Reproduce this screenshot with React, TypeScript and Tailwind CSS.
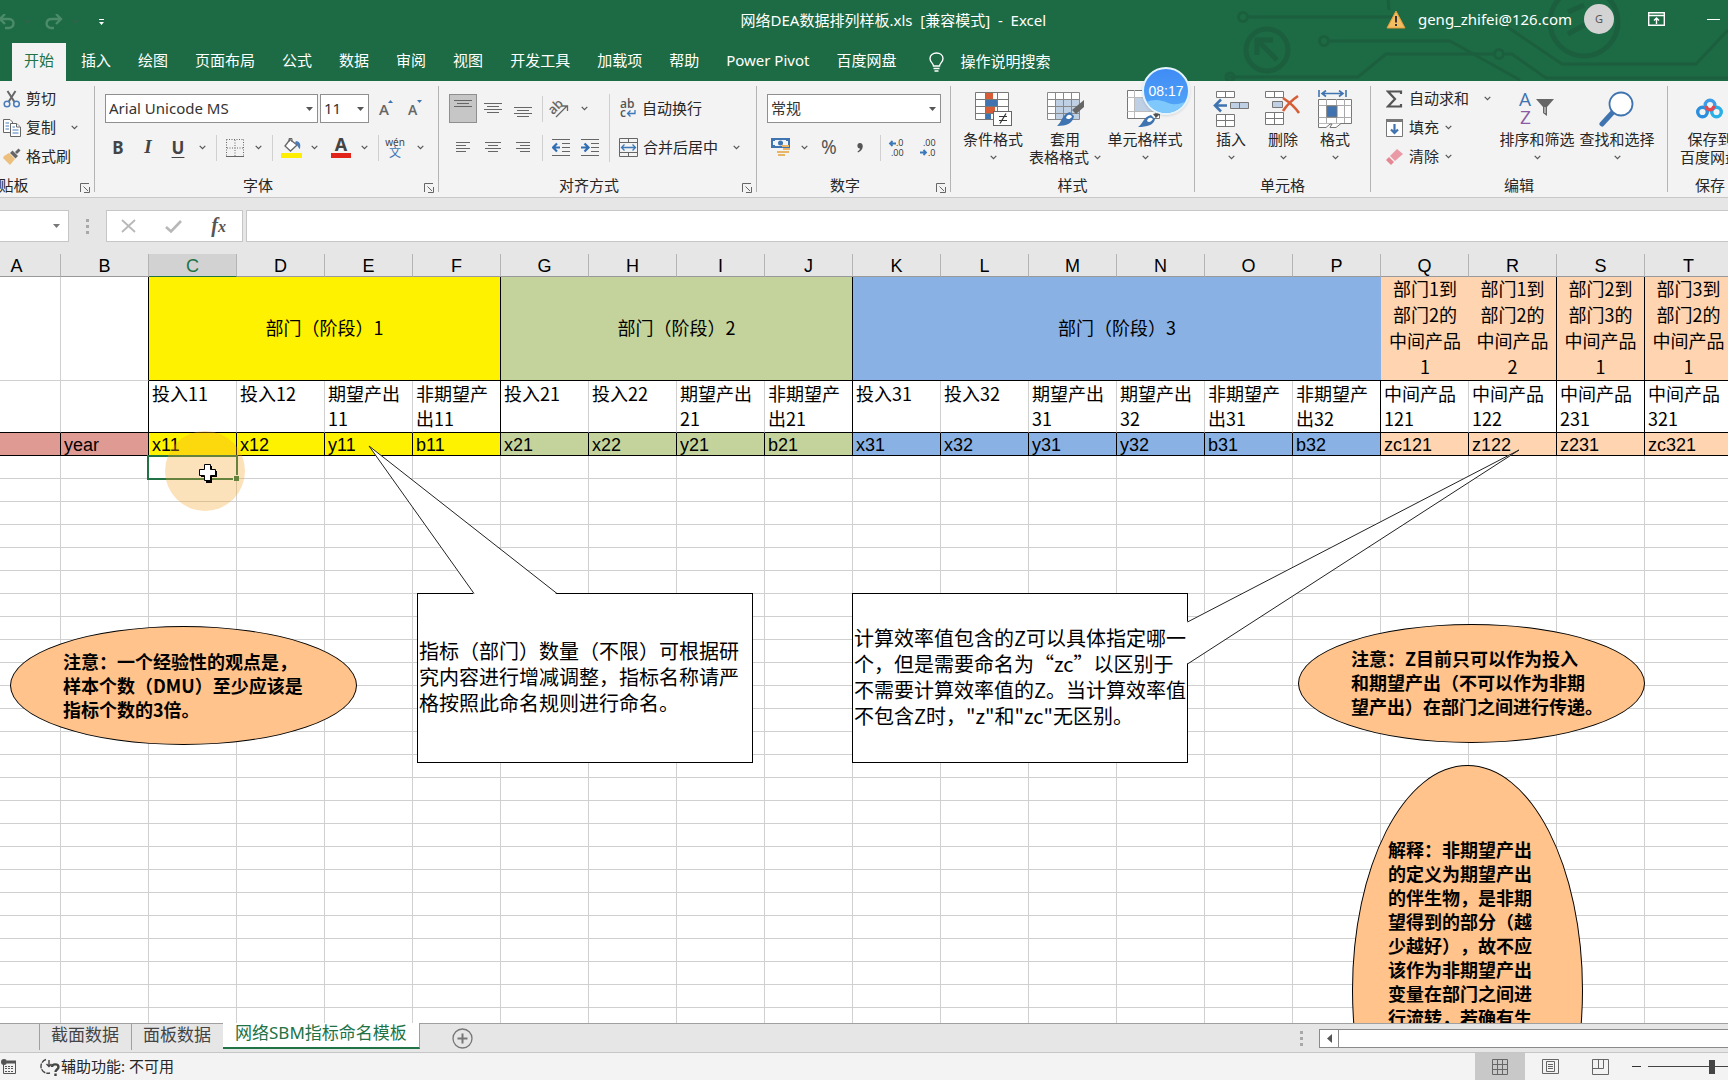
import { useState, type FunctionComponent, type ReactNode } from 'react'
import clsx from 'clsx'

interface ChildrenProps {
  children?: ReactNode
}

interface GroupProps extends ChildrenProps {
  label: string
  className: string
  launcher?: boolean
}

interface IconButtonProps extends ChildrenProps {
  label: string
  className?: string
}

interface BigButtonProps {
  icon: ReactNode
  lines: string[]
  className: string
  noChevron?: boolean
}

/* ---------- sheet data ---------- */

const COLUMNS = 'ABCDEFGHIJKLMNOPQRST'.split('')

const FILL: Record<string, string> = {
  rose: 'bg-[#df9a94]',
  yellow: 'bg-[#fff200]',
  green: 'bg-[#c4d39b]',
  blue: 'bg-[#8ab1e3]',
  peach: 'bg-[#fed5b0]'
}

const HEADINGS = [
  { text: '部门（阶段）1', span: 4, fill: 'yellow', edge: true },
  { text: '部门（阶段）2', span: 4, fill: 'green', edge: true },
  { text: '部门（阶段）3', span: 6, fill: 'blue', edge: false },
  { text: '部门1到\n部门2的\n中间产品\n1', span: 1, fill: 'peach', edge: false },
  { text: '部门1到\n部门2的\n中间产品\n2', span: 1, fill: 'peach', edge: true },
  { text: '部门2到\n部门3的\n中间产品\n1', span: 1, fill: 'peach', edge: true },
  { text: '部门3到\n部门2的\n中间产品\n1', span: 1, fill: 'peach', edge: true }
]

const INDICATORS = [
  { name: '投入11', code: 'x11', fill: 'yellow' },
  { name: '投入12', code: 'x12', fill: 'yellow' },
  { name: '期望产出11', code: 'y11', fill: 'yellow' },
  { name: '非期望产出11', code: 'b11', fill: 'yellow', edge: true },
  { name: '投入21', code: 'x21', fill: 'green' },
  { name: '投入22', code: 'x22', fill: 'green' },
  { name: '期望产出21', code: 'y21', fill: 'green' },
  { name: '非期望产出21', code: 'b21', fill: 'green', edge: true },
  { name: '投入31', code: 'x31', fill: 'blue' },
  { name: '投入32', code: 'x32', fill: 'blue' },
  { name: '期望产出31', code: 'y31', fill: 'blue' },
  { name: '期望产出32', code: 'y32', fill: 'blue' },
  { name: '非期望产出31', code: 'b31', fill: 'blue' },
  { name: '非期望产出32', code: 'b32', fill: 'blue', edge: true },
  { name: '中间产品121', code: 'zc121', fill: 'peach' },
  { name: '中间产品122', code: 'z122', fill: 'peach', edge: true },
  { name: '中间产品231', code: 'z231', fill: 'peach', edge: true },
  { name: '中间产品321', code: 'zc321', fill: 'peach', edge: true }
]

const EMPTY_ROWS = Array.from({ length: 25 }, (_, i) => i + 4)

const MENU = [
  '开始',
  '插入',
  '绘图',
  '页面布局',
  '公式',
  '数据',
  '审阅',
  '视图',
  '开发工具',
  '加载项',
  '帮助',
  'Power Pivot',
  '百度网盘'
]

const SHEETS = ['截面数据', '面板数据', '网络SBM指标命名模板']

/* ---------- small pieces ---------- */

const Chevron: FunctionComponent = () => (
  <svg width="7" height="5" viewBox="0 0 7 5" fill="none" stroke="#555" strokeWidth="1.2">
    <path d="M0.7 0.8 3.5 3.6 6.3 0.8" />
  </svg>
)

const ChevronButton: FunctionComponent<{ label: string }> = ({ label }) => (
  <button aria-label={label} className="flex h-[29px] w-[18px] items-center justify-center">
    <Chevron />
  </button>
)

const IconButton: FunctionComponent<IconButtonProps> = ({ label, className, children }) => (
  <button
    aria-label={label}
    className={clsx('flex h-[29px] items-center justify-center', className ?? 'w-[30px]')}
  >
    {children}
  </button>
)

const Divider: FunctionComponent = () => <span className="ml-[5px] h-[26px] w-px bg-[#d0d0d0]" />

const Group: FunctionComponent<GroupProps> = ({ label, className, launcher, children }) => (
  <section className={clsx('flex shrink-0', className)}>
    <div className="flex min-w-0 flex-1 flex-col">
      <div className="h-[93px]">{children}</div>
      <div className="flex h-[23px] items-center">
        <p className="flex-1 whitespace-nowrap text-center">{label}</p>
        {launcher === true && (
          <button aria-label={label + '设置'} className="mr-px flex w-4 justify-center pt-1">
            <svg width="10" height="10" viewBox="0 0 10 10" fill="none" stroke="#666">
              <path d="M0.5 9V0.5H9M3.5 3.5 8 8M9.5 4V9.5H4" />
            </svg>
          </button>
        )}
      </div>
    </div>
    <span className="mt-[5px] h-[106px] w-px bg-[#b4b4b4]" />
  </section>
)

const BigButton: FunctionComponent<BigButtonProps> = ({ icon, lines, className, noChevron }) => (
  <button className={clsx('flex shrink-0 flex-col items-center pt-2', className)}>
    <span className="flex h-10 items-center justify-center">{icon}</span>
    <span className="h-[19px] whitespace-nowrap leading-5">{lines[0]}</span>
    <span className="flex h-[19px] items-center gap-[5px] whitespace-nowrap leading-[19px]">
      {lines[1]}
      {noChevron !== true && <Chevron />}
    </span>
  </button>
)

const Combo: FunctionComponent<{ label: string, value: string, className: string }> = ({
  label,
  value,
  className
}) => (
  <div className={clsx('relative h-[29px]', className)}>
    <select
      aria-label={label}
      className="h-full w-full appearance-none border border-[#8f8f8f] bg-white pl-[3px] text-[15px] text-[#333]"
    >
      <option>{value}</option>
    </select>
    <svg
      className="pointer-events-none absolute right-[5px] top-[13px]"
      width="7"
      height="4"
      viewBox="0 0 7 4"
    >
      <path d="M0 0H7L3.5 4Z" fill="#555" />
    </svg>
  </div>
)

/* ---------- icons ---------- */

const Lines: FunctionComponent<{ rows: Array<[number, number, number]> }> = ({ rows }) => (
  <svg width="18" height="17" viewBox="0 0 18 17" stroke="#666" strokeWidth="1">
    {rows.map(([x1, x2, y]) => (
      <path key={y} d={`M${x1} ${y}H${x2}`} />
    ))}
  </svg>
)

const Indent: FunctionComponent<{ right?: boolean }> = ({ right }) => (
  <svg width="18" height="17" viewBox="0 0 18 17" fill="none" stroke="#666">
    <path d="M0 0.5H18M10 4.5H18M10 8.5H18M10 12.5H18M0 16.5H18" />
    <path
      stroke="#2f6eb5"
      strokeWidth="2.2"
      d={right === true ? 'M0 8.5H7M3.5 4.5 7.5 8.5 3.5 12.5' : 'M1 8.5H8M5 4.5 1 8.5 5 12.5'}
    />
  </svg>
)

const ScissorsIcon = (
  <svg width="18" height="18" viewBox="0 0 18 18" fill="none">
    <path d="M4.5 1 11.5 12M12.5 1 5.5 12" stroke="#666" strokeWidth="2" />
    <circle cx="4" cy="14" r="2.8" stroke="#4a7cba" strokeWidth="1.5" />
    <circle cx="13.5" cy="14" r="2.8" stroke="#4a7cba" strokeWidth="1.5" />
  </svg>
)

const CopyIcon = (
  <svg width="18" height="18" viewBox="0 0 18 18" fill="#fff" stroke="#666">
    <path d="M0.5 0.5H7L9.5 3V13.5H0.5Z" />
    <path d="M7.5 4.5H13.5L17.5 8V17.5H7.5Z" />
    <path d="M13.5 4.5V8H17" />
    <path d="M2.5 4H6M2.5 7H6M2.5 10H6M9.5 8H12M9.5 11H15.5M9.5 14H15.5" stroke="#4a7cba" />
  </svg>
)

const BrushIcon = (
  <svg width="18" height="18" viewBox="0 0 18 18">
    <path d="M1 8 6 5 12 11 7 17 0 10Z" fill="#ecc07c" />
    <path d="M7 5 9.5 2.5 15 8 12.5 10.5Z" fill="#666" />
    <path d="M12 4 15.5 0.5 17.5 2.5 14 6Z" fill="#666" />
  </svg>
)

const BorderIcon = (
  <svg width="18" height="18" viewBox="0 0 18 18" fill="none" stroke="#666">
    <path strokeDasharray="1 1.5" d="M0.5 0.5H17.5M0.5 0.5V17M17.5 0.5V17M9 1V17M1 9H17" />
    <path d="M0 17.5H18" />
  </svg>
)

const FillIcon = (
  <svg width="21" height="21" viewBox="0 0 21 21" fill="none">
    <path d="M9 2.5 16 8 9.5 14 4 9Z" fill="#fff" stroke="#666" strokeWidth="1.3" />
    <path d="M8 5V1.5H11V5" stroke="#666" />
    <path d="M15 4C20 5 19.5 8 19 12 17 11 17 8 14 6Z" fill="#4a7cba" />
    <rect y="16" width="21" height="5" fill="#ffee00" />
  </svg>
)

const OrientationIcon = (
  <svg className="overflow-visible" width="20" height="19" viewBox="0 0 20 19" fill="none">
    <text
      x="0"
      y="13"
      fontSize="13"
      fontFamily="Open Sans"
      fontWeight="600"
      fill="#666"
      transform="rotate(-45 6 10)"
    >
      ab
    </text>
    <path d="M7 18 18 7M13 7H18.5V12" stroke="#666" strokeWidth="1.3" />
  </svg>
)

const WrapIcon = (
  <svg className="overflow-visible" width="18" height="20" viewBox="0 0 18 20" fill="none">
    <text x="1" y="9" fontSize="12" fontFamily="Open Sans" fontWeight="600" fill="#555">
      ab
    </text>
    <text x="1" y="18" fontSize="12" fontFamily="Open Sans" fontWeight="600" fill="#555">
      c
    </text>
    <path d="M16 11V14.5H9M11.5 11.5 8.5 14.5 11.5 17.5" stroke="#3d78b8" strokeWidth="1.3" />
  </svg>
)

const MergeIcon = (
  <svg width="19" height="19" viewBox="0 0 19 19" fill="none" stroke="#666">
    <path d="M0.5 0.5H18.5V18.5H0.5ZM0.5 4.5H18.5M0.5 14.5H18.5M9.5 0.5V4.5M9.5 14.5V18.5" />
    <path
      d="M2.5 9.5H16.5M5.5 6.5 2.5 9.5 5.5 12.5M13.5 6.5 16.5 9.5 13.5 12.5"
      stroke="#3d78b8"
      strokeWidth="1.3"
    />
  </svg>
)

const CurrencyIcon = (
  <svg width="20" height="19" viewBox="0 0 20 19">
    <rect x="0" y="0" width="19" height="10" fill="#3f74b0" />
    <path d="M2 3H4V2H15V3H17V7H15V8H4V7H2Z" fill="#f0f4f8" />
    <circle cx="9.5" cy="5" r="2.5" fill="#3f74b0" />
    <path d="M11 7H18V9H11ZM12 10H19V12H12ZM11 13H18V15H11ZM6 13H11V15H6ZM7 16H14V18H7Z" fill="#e8b566" />
  </svg>
)

const Decimals: FunctionComponent<{ less?: boolean }> = ({ less }) => (
  <svg
    className="overflow-visible"
    width="17"
    height="18"
    viewBox="0 0 17 18"
    fontFamily="Open Sans"
    fontSize="9"
    fill="#333"
  >
    <text x={less === true ? 3 : 7} y="7">
      {less === true ? '.00' : '.0'}
    </text>
    <text x={less === true ? 8 : 2} y="17">
      {less === true ? '.0' : '.00'}
    </text>
    <path
      d={less === true ? 'M0 13.5H6M3.5 11 6 13.5 3.5 16' : 'M7 4.5H1M3.5 2 1 4.5 3.5 7'}
      fill="none"
      stroke="#3d78b8"
      strokeWidth="1.8"
    />
  </svg>
)

const ConditionalIcon = (
  <svg width="37" height="35" viewBox="0 0 37 35">
    <rect x="0.5" y="0.5" width="33" height="27" fill="#fff" />
    <path d="M11 1H18V7H11ZM11 15H20V21H11Z" fill="#d65d35" />
    <path d="M11 8H22V14H11ZM11 22H16V28H11Z" fill="#3f74b0" />
    <path
      d="M0.5 0.5H33.5V27.5H0.5ZM0.5 7.5H33.5M0.5 14.5H33.5M0.5 21.5H33.5M10.5 0V28M22.5 0V28"
      fill="none"
      stroke="#777"
    />
    <rect x="18.5" y="19.5" width="18" height="14" fill="#fff" stroke="#666" />
    <path d="M24 24.5H32M24 28.5H32M31 21.5 25 31.5" stroke="#333" strokeWidth="1.2" />
  </svg>
)

const TableStyleIcon = (
  <svg width="37" height="35" viewBox="0 0 37 35">
    <rect x="0.5" y="0.5" width="32" height="27" fill="#fff" />
    <rect x="8" y="7" width="24" height="20" fill="#bfd0e4" />
    <path
      d="M0.5 0.5H32.5V27.5H0.5ZM0.5 7.5H32.5M0.5 14.5H32.5M0.5 21.5H32.5M8.5 0V28M16.5 0V28M24.5 0V28"
      fill="none"
      stroke="#888"
    />
    <path d="M37 8V15L29 22 25 18Z" fill="#666" />
    <path d="M23 20 27 24C26 31 20 34 10 34 15 30 15 22 23 20Z" fill="#3f74b0" />
    <path d="M19 26C20 22 24 22 25 25 23 27 21 28 19 26Z" fill="#fff" />
  </svg>
)

const CellStyleIcon = (
  <svg width="37" height="38" viewBox="0 0 37 38">
    <path d="M0.5 0.5H32.5V28.5H0.5Z" fill="#fff" stroke="#777" />
    <rect x="8" y="8" width="20" height="13" fill="#bfd0e4" />
    <path d="M0.5 7.5H32.5M0.5 21.5H32.5M7.5 0V28M28.5 0V28" fill="none" stroke="#bbb" />
    <path d="M35 22 29 28 26 24Z" fill="#555" />
    <path d="M24 25 28 29C27 35 20 37 11 37 16 34 16 27 24 25Z" fill="#3f74b0" />
    <path d="M20 31C21 27 24 27 26 29 24 32 22 33 20 31Z" fill="#fff" />
  </svg>
)

const InsertIcon = (
  <svg width="36" height="36" viewBox="0 0 36 36" fill="#fff" stroke="#777">
    <path d="M3.5 0.5H21.5V6.5H3.5ZM12.5 0.5V6.5" />
    <path d="M3.5 23.5H21.5V35.5H3.5ZM12.5 23.5V35.5M3.5 29.5H21.5" />
    <path d="M17.5 11.5H35.5V17.5H17.5ZM26.5 11.5V17.5" fill="#bfd0e4" />
    <path d="M2 14.5H14M8 8.5 2 14.5 8 20.5" fill="none" stroke="#3f74b0" strokeWidth="2.6" />
  </svg>
)

const DeleteIcon = (
  <svg width="36" height="36" viewBox="0 0 36 36" fill="#fff" stroke="#777">
    <path d="M0.5 0.5H18.5V6.5H0.5ZM9.5 0.5V6.5" />
    <path d="M0.5 21.5H18.5V33.5H0.5ZM9.5 21.5V33.5M0.5 27.5H18.5" />
    <path d="M7.5 10.5H17.5V16.5H7.5Z" fill="#bfd0e4" />
    <path d="M18 7C24 11 30 16 34 22M33 5C27 9 22 14 18 20" fill="none" stroke="#d65d35" strokeWidth="2.6" />
  </svg>
)

const FormatIcon = (
  <svg width="35" height="38" viewBox="0 0 35 38" fill="none" stroke="#777">
    <path
      d="M1 0V7M28 0V7M4 3.5H25M8 0.5 4 3.5 8 6.5M21 0.5 25 3.5 21 6.5"
      stroke="#3f74b0"
      strokeWidth="1.6"
    />
    <path d="M0.5 9.5H33.5V33.5H0.5Z" fill="#fff" />
    <path d="M0.5 15.5H33.5M0.5 27.5H33.5M8.5 9V33M18.5 9V33M26.5 9V33" stroke="#aaa" />
    <rect x="9" y="16" width="10" height="11" fill="#3f74b0" />
    <path d="M0.5 33.5V37.5H8L12 34H14L12 37.5H18L23 33.5" fill="#fff" />
  </svg>
)

const SortIcon = (
  <svg className="overflow-visible" width="36" height="36" viewBox="0 0 36 36">
    <text x="0" y="15" fontSize="19" fontFamily="Open Sans" fontWeight="500" fill="#3f74b0">
      A
    </text>
    <text x="1" y="33" fontSize="19" fontFamily="Open Sans" fontWeight="500" fill="#8b5ba5">
      Z
    </text>
    <path d="M17 8H35L28 16V25L24 22V16Z" fill="#666" />
    <path d="M26 16V22" stroke="#eee" />
  </svg>
)

const SearchIcon = (
  <svg width="36" height="36" viewBox="0 0 36 36" fill="none" stroke="#3f74b0">
    <path d="M14 21 3 33" strokeWidth="5" strokeLinecap="round" />
    <circle cx="22" cy="13" r="11.5" fill="#fff" strokeWidth="1.8" />
  </svg>
)

const CloudIcon = (
  <svg width="28" height="22" viewBox="0 0 28 22" fill="none" strokeWidth="3.4">
    <circle cx="6.5" cy="14" r="4.8" stroke="#2b8fe0" />
    <circle cx="20.5" cy="14" r="4.8" stroke="#2ab0e6" />
    <circle cx="14" cy="7" r="4.8" stroke="#3d9be8" />
    <path d="M10 8C11 13 17 13 18 8" stroke="#e5484d" />
  </svg>
)

const SigmaIcon = (
  <svg width="17" height="18" viewBox="0 0 17 18" fill="none" stroke="#555" strokeWidth="2.2">
    <path d="M15 4V1.5H2L9 9 2 16.5H15V14" />
  </svg>
)

const FillDownIcon = (
  <svg width="17" height="18" viewBox="0 0 17 18" fill="#fff" stroke="#777">
    <path d="M0.5 1.5H16.5V17.5H0.5Z" />
    <path d="M0 1.5H17" strokeWidth="3" />
    <path d="M8.5 5V14M5 10.5 8.5 14 12 10.5" fill="none" stroke="#3f74b0" strokeWidth="2.2" />
  </svg>
)

const EraserIcon = (
  <svg width="17" height="18" viewBox="0 0 17 18">
    <path d="M11 1 17 6 9 13 4 8Z" fill="#ea9aa5" />
    <path d="M3 9 8 14 5 17 0 12Z" fill="#e58792" />
  </svg>
)

/* ---------- window header ---------- */

const Circuit: FunctionComponent = () => (
  <svg
    className="pointer-events-none absolute right-0 top-0"
    width="508"
    height="81"
    viewBox="1220 0 508 81"
    fill="none"
    stroke="#1c5f3e"
    strokeWidth="3"
  >
    <circle cx="1243" cy="17" r="4.5" />
    <path d="M1248 17H1400M1388 0 1389 10" />
    <circle cx="1267" cy="50" r="21" strokeWidth="5" />
    <path d="M1277 60 1259 42M1257 55V40H1273" strokeWidth="5" />
    <path d="M1228 77H1358L1386 54H1493M1505 54H1512L1546 78H1728" />
    <circle cx="1230" cy="77" r="4" />
    <circle cx="1499" cy="54" r="4.5" />
    <circle cx="1324" cy="41" r="4.5" />
    <path d="M1329 41H1450L1520 80M1500 22 1562 64H1696L1728 30" />
    <circle cx="1584" cy="22" r="34" strokeWidth="5" />
    <path d="M1568 12 1584 5M1568 34 1590 22" strokeWidth="5" />
  </svg>
)

const TitleBar: FunctionComponent = () => (
  <div className="flex h-[43px] items-center text-white">
    <div className="flex w-3/7 shrink-0 items-center text-[#4b8b6a]">
      <button aria-label="撤消" className="w-[15px]">
        <svg width="15" height="16" viewBox="3 0 15 16" fill="none" stroke="currentColor" strokeWidth="2.4">
          <path d="M8 0 3 5 8 10M3 5H12C18 5 18 13 12 14H8" />
        </svg>
      </button>
      <span className="w-[30px] pl-[9px] opacity-50">
        <Chevron />
      </span>
      <button aria-label="恢复" className="w-[18px]">
        <svg width="18" height="16" viewBox="0 0 18 16" fill="none" stroke="currentColor" strokeWidth="2.4">
          <path d="M11 0 16 5 11 10M16 5H7C0 5 0 13 6 14H9" />
        </svg>
      </button>
      <span className="w-[36px] pl-[9px] opacity-50">
        <Chevron />
      </span>
      <button aria-label="自定义快速访问工具栏">
        <svg width="5" height="6" viewBox="0 0 5 6" fill="#fff">
          <path d="M0 0H5V1H0ZM0 3H5L2.5 6Z" />
        </svg>
      </button>
    </div>
    <h1 className="whitespace-pre pb-[2px] text-[15px]">
      {'网络DEA数据排列样板.xls  [兼容模式]  -  Excel'}
    </h1>
    <div className="relative ml-auto flex items-center pb-[5px] pr-2">
      <svg width="20" height="19" viewBox="0 0 20 19">
        <path d="M10 1 19 18H1Z" fill="#f3bd62" stroke="#e09a3a" />
        <path d="M10 6V12.5M10 14V16" stroke="#333" strokeWidth="2" />
      </svg>
      <span className="ml-3 text-[15px]">geng_zhifei@126.com</span>
      <span className="ml-3 flex size-[30px] items-center justify-center rounded-full bg-[#d3d3d3] text-[11px] text-[#555]">
        G
      </span>
      <button aria-label="功能区显示选项" className="ml-[34px]">
        <svg width="17" height="14" viewBox="0 0 17 14" fill="none" stroke="#fff" strokeWidth="1.4">
          <path d="M0.7 0.7H16.3V13.3H0.7ZM0.7 3.5H16.3M8.5 12V6M6 8.5 8.5 6 11 8.5" />
        </svg>
      </button>
      <button aria-label="最小化" className="ml-[42px] h-4 w-[13px]">
        <span className="block h-px w-full bg-white" />
      </button>
    </div>
  </div>
)

const MenuBar: FunctionComponent = () => {
  const [active, setActive] = useState<string>('开始')

  return (
    <nav className="relative flex h-[38px] items-stretch gap-[3px] whitespace-nowrap pl-3 text-[15px] text-white">
      {MENU.map((item) => (
        <button
          key={item}
          onClick={() => {
            setActive(item)
          }}
          className={clsx('px-3 pb-1', item === active && 'bg-[#f3f3f3] text-[#217346]')}
        >
          {item}
        </button>
      ))}
      <button className="flex items-center gap-4 pl-[18px]">
        <svg width="15" height="20" viewBox="0 0 15 20" fill="none" stroke="#fff" strokeWidth="1.4">
          <path d="M4.5 14C4.5 11 1 10.5 1 6.5 1 3 4 1 7.5 1S14 3 14 6.5C14 10.5 10.5 11 10.5 14ZM4.5 16.5H10.5M5.5 19H9.5" />
        </svg>
        <span className="pb-[2px]">操作说明搜索</span>
      </button>
    </nav>
  )
}

/* ---------- ribbon ---------- */

const Ribbon: FunctionComponent = () => (
  <div className="flex h-[117px] overflow-hidden border-b border-[#c8c8c8] bg-[#f3f3f3] text-[15px] text-[#262626]">
    <Group label="剪贴板" className="-ml-[65px] w-[160px]" launcher>
      <div className="flex flex-col pl-[68px] pt-[3px]">
        <button className="flex h-[29px] items-center gap-[5px]">{ScissorsIcon}剪切</button>
        <button className="flex h-[29px] items-center gap-[5px]">
          {CopyIcon}复制
          <span className="pl-[10px]">
            <Chevron />
          </span>
        </button>
        <button className="flex h-[29px] items-center gap-[5px]">{BrushIcon}格式刷</button>
      </div>
    </Group>

    <Group label="字体" className="w-[344px]" launcher>
      <div className="flex flex-col gap-[10px] pt-[13px]">
        <div className="flex gap-[2px] pl-[10px]">
          <Combo label="字体" value="Arial Unicode MS" className="w-[213px]" />
          <Combo label="字号" value="11" className="w-[49px]" />
          <IconButton label="增大字号">
            <svg className="overflow-visible" width="15" height="17" viewBox="0 0 15 17">
              <text x="0" y="15" fontSize="15" fontFamily="Open Sans" fontWeight="600" fill="#666">
                A
              </text>
              <path d="M9 3 11.5 0 14 3Z" fill="#3f74b0" />
            </svg>
          </IconButton>
          <IconButton label="减小字号" className="w-6">
            <svg className="overflow-visible" width="15" height="17" viewBox="0 0 15 17">
              <text x="0" y="15" fontSize="14" fontFamily="Open Sans" fontWeight="600" fill="#666">
                A
              </text>
              <path d="M9 0H14L11.5 3Z" fill="#3f74b0" />
            </svg>
          </IconButton>
        </div>
        <div className="flex items-center pl-2 text-[#444]">
          <IconButton label="加粗">
            <b className="text-[17px]">B</b>
          </IconButton>
          <IconButton label="倾斜">
            <b className="font-['Liberation_Serif',serif] text-[19px] italic">I</b>
          </IconButton>
          <IconButton label="下划线">
            <b className="text-[17px] underline underline-offset-[3px]">U</b>
          </IconButton>
          <ChevronButton label="下划线选项" />
          <Divider />
          <IconButton label="边框" className="w-8 pl-1">
            {BorderIcon}
          </IconButton>
          <ChevronButton label="边框选项" />
          <Divider />
          <IconButton label="填充颜色" className="w-8 pl-1">
            {FillIcon}
          </IconButton>
          <ChevronButton label="填充颜色选项" />
          <IconButton label="字体颜色" className="w-8 pl-1">
            <span className="flex flex-col items-center">
              <b className="h-4 text-[18px] leading-[15px]">A</b>
              <span className="h-[5px] w-5 bg-[#e2231a]" />
            </span>
          </IconButton>
          <ChevronButton label="字体颜色选项" />
          <Divider />
          <IconButton label="拼音" className="w-8">
            <span className="flex flex-col items-center text-[10px] leading-[9px]">
              wén
              <span className="text-[12px] leading-[11px] text-[#3f74b0]">文</span>
            </span>
          </IconButton>
          <ChevronButton label="拼音选项" />
        </div>
      </div>
    </Group>

    <Group label="对齐方式" className="w-[318px]" launcher>
      <div className="flex pt-[13px]">
        <div className="flex w-[170px] flex-col gap-[10px] pl-[10px]">
          <div className="flex items-center">
            <IconButton label="顶端对齐" className="w-7 border border-[#8f8f8f] bg-[#c6c6c6]">
              <Lines rows={[[0, 18, 0.5], [3, 15, 3.5], [0, 18, 6.5]]} />
            </IconButton>
            <IconButton label="垂直居中" className="w-8">
              <Lines rows={[[0, 18, 3.5], [3, 15, 6.5], [0, 18, 9.5], [3, 15, 12.5]]} />
            </IconButton>
            <IconButton label="底端对齐" className="w-7">
              <Lines rows={[[0, 18, 7.5], [3, 15, 10.5], [0, 18, 13.5], [3, 15, 16.5]]} />
            </IconButton>
            <Divider />
            <IconButton label="方向" className="w-8">
              {OrientationIcon}
            </IconButton>
            <ChevronButton label="方向选项" />
          </div>
          <div className="flex items-center">
            <IconButton label="左对齐" className="w-7">
              <Lines rows={[[2, 16, 3.5], [2, 12, 6.5], [2, 16, 9.5], [2, 12, 12.5]]} />
            </IconButton>
            <IconButton label="居中" className="w-8">
              <Lines rows={[[1, 17, 3.5], [4, 14, 6.5], [1, 17, 9.5], [4, 14, 12.5]]} />
            </IconButton>
            <IconButton label="右对齐" className="w-7">
              <Lines rows={[[2, 16, 3.5], [6, 16, 6.5], [2, 16, 9.5], [6, 16, 12.5]]} />
            </IconButton>
            <Divider />
            <IconButton label="减少缩进量" className="w-8 pl-1">
              <Indent />
            </IconButton>
            <IconButton label="增加缩进量">
              <Indent right />
            </IconButton>
          </div>
        </div>
        <div className="flex flex-col gap-[10px] border-l border-[#d0d0d0] pl-[9px]">
          <button className="flex h-[29px] items-center gap-[5px]">
            {WrapIcon}
            自动换行
          </button>
          <button className="flex h-[29px] items-center gap-[5px]">
            {MergeIcon}
            合并后居中
            <span className="pl-[10px]">
              <Chevron />
            </span>
          </button>
        </div>
      </div>
    </Group>

    <Group label="数字" className="w-[194px]" launcher>
      <div className="flex flex-col gap-[10px] pt-[13px]">
        <Combo label="数字格式" value="常规" className="ml-[10px] w-[174px]" />
        <div className="flex items-center pl-2">
          <IconButton label="会计数字格式" className="w-[30px] pl-[2px]">
            {CurrencyIcon}
          </IconButton>
          <ChevronButton label="会计数字格式选项" />
          <IconButton label="百分比样式" className="w-8">
            <span className="text-[19px] text-[#555]">%</span>
          </IconButton>
          <IconButton label="千位分隔样式">
            <svg width="6" height="10" viewBox="0 0 6 10" fill="#555">
              <path d="M3 0C7 0 7 7 1 9.5L0.500 8.500C2 7.500 3 6.500 3 5.500 -0.500 5.500 -0.500 0 3 0Z" />
            </svg>
          </IconButton>
          <Divider />
          <IconButton label="增加小数位数" className="w-8">
            <Decimals />
          </IconButton>
          <IconButton label="减少小数位数">
            <Decimals less />
          </IconButton>
        </div>
      </div>
    </Group>

    <Group label="样式" className="w-[244px]">
      <div className="flex pl-[6px]">
        <BigButton icon={ConditionalIcon} lines={['条件格式']} className="w-[72px]" />
        <BigButton icon={TableStyleIcon} lines={['套用', '表格格式']} className="w-[72px]" />
        <BigButton icon={CellStyleIcon} lines={['单元格样式']} className="w-[88px]" />
      </div>
    </Group>

    <Group label="单元格" className="w-[176px]">
      <div className="flex pl-[10px]">
        <BigButton icon={InsertIcon} lines={['插入']} className="w-[52px]" />
        <BigButton icon={DeleteIcon} lines={['删除']} className="w-[52px]" />
        <BigButton icon={FormatIcon} lines={['格式']} className="w-[52px]" />
      </div>
    </Group>

    <Group label="编辑" className="w-[297px]">
      <div className="flex">
        <div className="flex w-[126px] flex-col pl-[15px] pt-[3px]">
          <button className="flex h-[29px] items-center gap-[6px] whitespace-nowrap">
            {SigmaIcon}自动求和
            <span className="pl-[9px]">
              <Chevron />
            </span>
          </button>
          <button className="flex h-[29px] items-center gap-[6px] whitespace-nowrap">
            {FillDownIcon}填充
            <Chevron />
          </button>
          <button className="flex h-[29px] items-center gap-[6px] whitespace-nowrap">
            {EraserIcon}清除
            <Chevron />
          </button>
        </div>
        <BigButton icon={SortIcon} lines={['排序和筛选']} className="w-20" />
        <BigButton icon={SearchIcon} lines={['查找和选择']} className="w-20" />
      </div>
    </Group>

    <Group label="保存" className="w-[85px]">
      <BigButton icon={CloudIcon} lines={['保存到', '百度网盘']} className="w-full" noChevron />
    </Group>
  </div>
)

const Dots: FunctionComponent = () => (
  <span className="flex flex-col gap-[3px]">
    <span className="size-[3px] bg-[#a8a8a8]" />
    <span className="size-[3px] bg-[#a8a8a8]" />
    <span className="size-[3px] bg-[#a8a8a8]" />
  </span>
)

const FormulaBar: FunctionComponent = () => (
  <div className="flex h-14 items-start bg-[#e6e6e6] pt-3">
    <button
      aria-label="名称框"
      className="flex h-8 w-[69px] items-center justify-end border border-l-0 border-[#c6c6c6] bg-white pr-2"
    >
      <svg width="7" height="4" viewBox="0 0 7 4">
        <path d="M0 0H7L3.5 4Z" fill="#777" />
      </svg>
    </button>
    <div className="flex h-8 w-[37px] items-center justify-center">
      <Dots />
    </div>
    <div className="flex h-8 w-[137px] items-center justify-between border border-[#c6c6c6] bg-white pl-[14px] pr-4">
      <button aria-label="取消">
        <svg width="15" height="14" viewBox="0 0 15 14" stroke="#b8b8b8" strokeWidth="1.8">
          <path d="M1 1 14 13M14 1 1 13" />
        </svg>
      </button>
      <button aria-label="输入">
        <svg width="17" height="13" viewBox="0 0 17 13" fill="none" stroke="#b8b8b8" strokeWidth="2.6">
          <path d="M1 7 6 11.5 16 1" />
        </svg>
      </button>
      <button
        aria-label="插入函数"
        className="font-['Liberation_Serif',serif] text-[20px] font-bold italic leading-5 text-[#555]"
      >
        f<span className="text-[16px]">x</span>
      </button>
    </div>
    <input
      aria-label="编辑栏"
      className="ml-[3px] h-8 min-w-0 flex-1 border border-r-0 border-[#c6c6c6] bg-white px-2 outline-none"
    />
  </div>
)

/* ---------- sheet ---------- */

const SheetTable: FunctionComponent = () => (
  <table className="-ml-[27px] w-[calc(100%+27px)] table-fixed border-separate border-spacing-0 text-[18px] text-black">
    <colgroup>
      {COLUMNS.map((c) => (
        <col key={c} className="w-[88px]" />
      ))}
    </colgroup>
    <thead>
      <tr>
        {COLUMNS.map((c) => (
          <th
            key={c}
            className={clsx(
              "h-[23px] border-b border-r border-r-[#b4b4b4] p-0 pt-[2px] font-['Liberation_Sans',sans-serif] font-normal leading-5",
              c === 'C'
                ? 'border-b-[#217346] bg-[#d2d2d2] text-[#217346]'
                : 'border-b-[#999] bg-[#e6e6e6]'
            )}
          >
            {c}
          </th>
        ))}
      </tr>
    </thead>
    <tbody>
      <tr>
        <td className="h-[104px] border-b border-r border-[#d0d0d0] p-0" />
        <td className="border-b border-r border-b-[#d0d0d0] border-r-black p-0" />
        {HEADINGS.map((h, i) => (
          <td
            key={i}
            colSpan={h.span}
            className={clsx(
              'border-b border-b-black p-0 text-center leading-[26px]',
              FILL[h.fill],
              h.edge && 'border-r border-r-black'
            )}
          >
            <div className="flex h-[103px] items-center justify-center whitespace-pre pb-[3px]">
              {h.text}
            </div>
          </td>
        ))}
      </tr>
      <tr>
        <td className="h-[52px] border-b border-r border-b-black border-r-[#d0d0d0] p-0" />
        <td className="border-b border-r border-black p-0" />
        {INDICATORS.map((d) => (
          <td
            key={d.code}
            className={clsx(
              'border-b border-r border-b-black p-0 align-top leading-[25px]',
              d.edge === true ? 'border-r-black' : 'border-r-[#d0d0d0]'
            )}
          >
            <div className="h-[51px] pl-[3px]">{d.name}</div>
          </td>
        ))}
      </tr>
      <tr className="font-['Liberation_Sans',sans-serif] leading-5">
        <td className={clsx('h-[23px] border-b border-r border-black p-0', FILL.rose)} />
        <td className={clsx('border-b border-r border-black p-0 pl-[3px] pt-[2px]', FILL.rose)}>
          year
        </td>
        {INDICATORS.map((d) => (
          <td
            key={d.code}
            className={clsx('border-b border-r border-black p-0 pl-[3px] pt-[2px]', FILL[d.fill])}
          >
            {d.code}
          </td>
        ))}
      </tr>
      {EMPTY_ROWS.map((r) => (
        <tr key={r}>
          {COLUMNS.map((c) => (
            <td key={c} className="h-[23px] border-b border-r border-[#d0d0d0] p-0" />
          ))}
        </tr>
      ))}
    </tbody>
  </table>
)

const Ellipse: FunctionComponent<{ text: string, className: string }> = ({ text, className }) => (
  <div
    className={clsx(
      'absolute whitespace-pre rounded-[50%] border border-black bg-[#ffc38b] text-[18px] font-bold leading-6 [text-spacing-trim:space-all]',
      className
    )}
  >
    {text}
  </div>
)

const Callout: FunctionComponent<{ text: string, className: string }> = ({ text, className }) => (
  <div
    className={clsx(
      'absolute flex h-[170px] w-[336px] items-center whitespace-pre border border-black bg-white pb-[2px] pl-px text-[20px] leading-[26px]',
      className
    )}
  >
    {text}
  </div>
)

// Shapes floating over the cells
const Drawings: FunctionComponent = () => (
  <>
    <Ellipse
      className="left-[10px] top-[372px] h-[119px] w-[347px] pl-[52px] pt-[22px]"
      text={'注意：一个经验性的观点是，\n样本个数（DMU）至少应该是\n指标个数的3倍。'}
    />
    <Callout
      className="left-[417px] top-[339px]"
      text={'指标（部门）数量（不限）可根据研\n究内容进行增减调整，指标名称请严\n格按照此命名规则进行命名。'}
    />
    <Callout
      className="left-[852px] top-[339px]"
      text={
        '计算效率值包含的Z可以具体指定哪一\n个，但是需要命名为“zc”以区别于\n不需要计算效率值的Z。当计算效率值\n不包含Z时，"z"和"zc"无区别。'
      }
    />
    <Ellipse
      className="left-[1298px] top-[370px] h-[119px] w-[347px] pl-[52px] pt-[21px]"
      text={'注意：Z目前只可以作为投入\n和期望产出（不可以作为非期\n望产出）在部门之间进行传递。'}
    />
    <Ellipse
      className="left-[1352px] top-[511px] h-[450px] w-[231px] pl-[35px] pt-[71px]"
      text={
        '解释：非期望产出\n的定义为期望产出\n的伴生物，是非期\n望得到的部分（越\n少越好），故不应\n该作为非期望产出\n变量在部门之间进\n行流转，若确有生'
      }
    />
    <svg
      className="pointer-events-none absolute left-0 top-0"
      width="1728"
      height="520"
      viewBox="0 0 1728 520"
      fill="#fff"
    >
      <path d="M474 340.5 369 192 557 340.5Z" />
      <path d="M1186.5 368 1519 196 1186.5 410Z" />
      <path
        d="M474 339.5 369 192 557 339.5M1187.5 368 1519 196 1187.5 410"
        fill="none"
        stroke="#222"
      />
    </svg>
  </>
)

const ActiveCell: FunctionComponent = () => (
  <div className="absolute left-[147px] top-[201px] h-[25px] w-[91px] border-2 border-[#217346]">
    <span className="absolute -bottom-[3px] -right-[3px] size-[6px] border-l border-t border-white bg-[#217346]" />
    <span className="absolute -top-[26px] left-4 size-20 rounded-full bg-[#f6a428]/32" />
    <svg className="absolute left-[49px] top-[7px]" width="20" height="20" viewBox="0 0 20 20">
      <path d="M8 2H14V7H19V13H14V19H8V13H3V7H8Z" fill="#000" />
      <path
        d="M6.5 0.5H12.5V5.5H17.5V11.5H12.5V16.5H6.5V11.5H1.5V5.5H6.5Z"
        fill="#fff"
        stroke="#000"
      />
    </svg>
  </div>
)

const SheetTabs: FunctionComponent = () => {
  const [sheet, setSheet] = useState<string>(SHEETS[2])

  return (
    <div className="flex h-[29px] shrink-0 border-t border-[#a0a0a0] bg-[#e6e6e6] text-[17px] text-[#444]">
      <div className="ml-[39px] flex">
        {SHEETS.map((s) => (
          <button
            key={s}
            onClick={() => {
              setSheet(s)
            }}
            className={clsx(
              'h-[26px] whitespace-nowrap pb-1 leading-5',
              s === sheet
                ? '-mt-px border-b-2 border-r border-b-[#217346] border-r-[#a0a0a0] bg-white px-3 text-[#217346]'
                : 'border-l border-[#a0a0a0] pl-[11px] pr-3'
            )}
          >
            {s}
          </button>
        ))}
      </div>
      <button aria-label="新工作表" className="ml-8 flex items-center">
        <svg width="21" height="21" viewBox="0 0 21 21" fill="none" stroke="#777">
          <circle cx="10.5" cy="10.5" r="9.5" strokeWidth="1.3" />
          <path d="M5.5 10.5H15.5M10.5 5.5V15.5" strokeWidth="2" />
        </svg>
      </button>
      <div className="ml-auto flex w-1/4 items-center">
        <span className="w-[23px] pl-1">
          <Dots />
        </span>
        <button
          aria-label="向左滚动"
          className="flex h-[19px] w-5 items-center justify-center border border-[#8a8a8a] bg-white"
        >
          <svg width="5" height="9" viewBox="0 0 5 9" fill="#555">
            <path d="M5 0V9L0 4.5Z" />
          </svg>
        </button>
        <div className="h-[19px] flex-1 border-y border-[#8a8a8a] bg-white" />
      </div>
    </div>
  )
}

const StatusBar: FunctionComponent = () => (
  <footer className="flex h-7 shrink-0 items-center border-t border-[#c6c6c6] bg-[#f3f3f3] text-[15px] text-[#262626]">
    <svg className="ml-px" width="15" height="15" viewBox="0 0 15 15" fill="none" stroke="#555">
      <path d="M2.5 3.5H14.5V14.5H2.5Z" />
      <path d="M4 7.5H13M4 9.5H13M4 12.5H13" strokeDasharray="2 1" />
      <path d="M6 3H15" strokeWidth="3" />
      <circle cx="3" cy="3" r="3" fill="#555" stroke="none" />
    </svg>
    <svg className="ml-6" width="20" height="18" viewBox="0 0 20 18" fill="none" stroke="#444">
      <path d="M6 1.5A7 7 0 1 0 10 15" strokeDasharray="5 1" strokeWidth="1.4" />
      <path d="M9 2V8M6.5 6 9 8.500 11.500 6" strokeWidth="1.4" />
      <path d="M12 9C12 5.5 18.500 5.5 18.500 9 18.500 11.500 15.500 11.500 15.500 14M15.500 15.500V18" strokeWidth="2.4" />
    </svg>
    <span className="ml-px pb-px">辅助功能: 不可用</span>
    <div className="ml-auto flex items-center">
      <button aria-label="普通" className="flex h-[27px] w-[50px] items-center justify-center bg-[#c8c8c8]">
        <svg width="16" height="16" viewBox="0 0 16 16" fill="none" stroke="#666">
          <path d="M0.5 0.5H15.5V15.5H0.5ZM0.5 5.5H15.5M0.5 10.5H15.5M5.5 0.5V15.5M10.5 0.5V15.5" />
        </svg>
      </button>
      <button aria-label="页面布局" className="flex h-[27px] w-[50px] items-center justify-center">
        <svg width="17" height="15" viewBox="0 0 17 15" fill="none" stroke="#666">
          <path d="M0.5 0.5H16.5V14.5H0.5ZM4.5 2.5H12.5V12.5H4.5ZM6 5.5H11M6 7.5H11M6 9.5H11" />
        </svg>
      </button>
      <button aria-label="分页预览" className="flex h-[27px] w-[50px] items-center justify-center">
        <svg width="17" height="16" viewBox="0 0 17 16" fill="none" stroke="#666">
          <path d="M0.5 0.5H16.5V15.5H0.5ZM0.5 9.5H11.5V0.5M6.5 0.5V9.5" />
        </svg>
      </button>
      <button aria-label="缩小" className="ml-[7px] flex h-4 w-[9px] items-center">
        <span className="block h-px w-full bg-[#333]" />
      </button>
      <input
        type="range"
        aria-label="缩放"
        defaultValue={82}
        className="ml-[7px] h-4 w-20 appearance-none bg-[linear-gradient(#444,#444)] bg-[length:100%_1px] bg-center bg-no-repeat [&::-webkit-slider-thumb]:h-[14px] [&::-webkit-slider-thumb]:w-[6px] [&::-webkit-slider-thumb]:appearance-none [&::-webkit-slider-thumb]:bg-[#444]"
      />
    </div>
  </footer>
)

// Recording timer bubble
const Timer: FunctionComponent = () => (
  <div className="absolute left-[1142px] top-[67px] flex size-12 items-center justify-center overflow-hidden rounded-full border-2 border-[#e4f4fc] bg-linear-to-b from-[#3f8bf5] to-[#55a8f8] font-['Liberation_Sans',sans-serif] text-[14px] text-white shadow">
    <svg className="absolute bottom-0 left-0" width="44" height="14" viewBox="0 0 44 14">
      <path d="M0 4C10 -1 18 1 24 4 32 7 38 4 44 2V14H0Z" fill="#7fc8fb" />
    </svg>
    <span className="relative">08:17</span>
  </div>
)

const App: FunctionComponent = () => (
  <div className="relative flex h-screen flex-col overflow-hidden bg-white font-['Noto_Sans','Noto_Sans_CJK_SC',sans-serif]">
    <header className="relative shrink-0 bg-[#1d6b45]">
      <Circuit />
      <TitleBar />
      <MenuBar />
    </header>
    <div className="shrink-0">
      <Ribbon />
      <FormulaBar />
    </div>
    <main className="relative min-h-0 flex-1 overflow-hidden font-['Noto_Sans_CJK_SC',sans-serif]">
      <SheetTable />
      <Drawings />
      <ActiveCell />
    </main>
    <SheetTabs />
    <StatusBar />
    <Timer />
  </div>
)

export default App
